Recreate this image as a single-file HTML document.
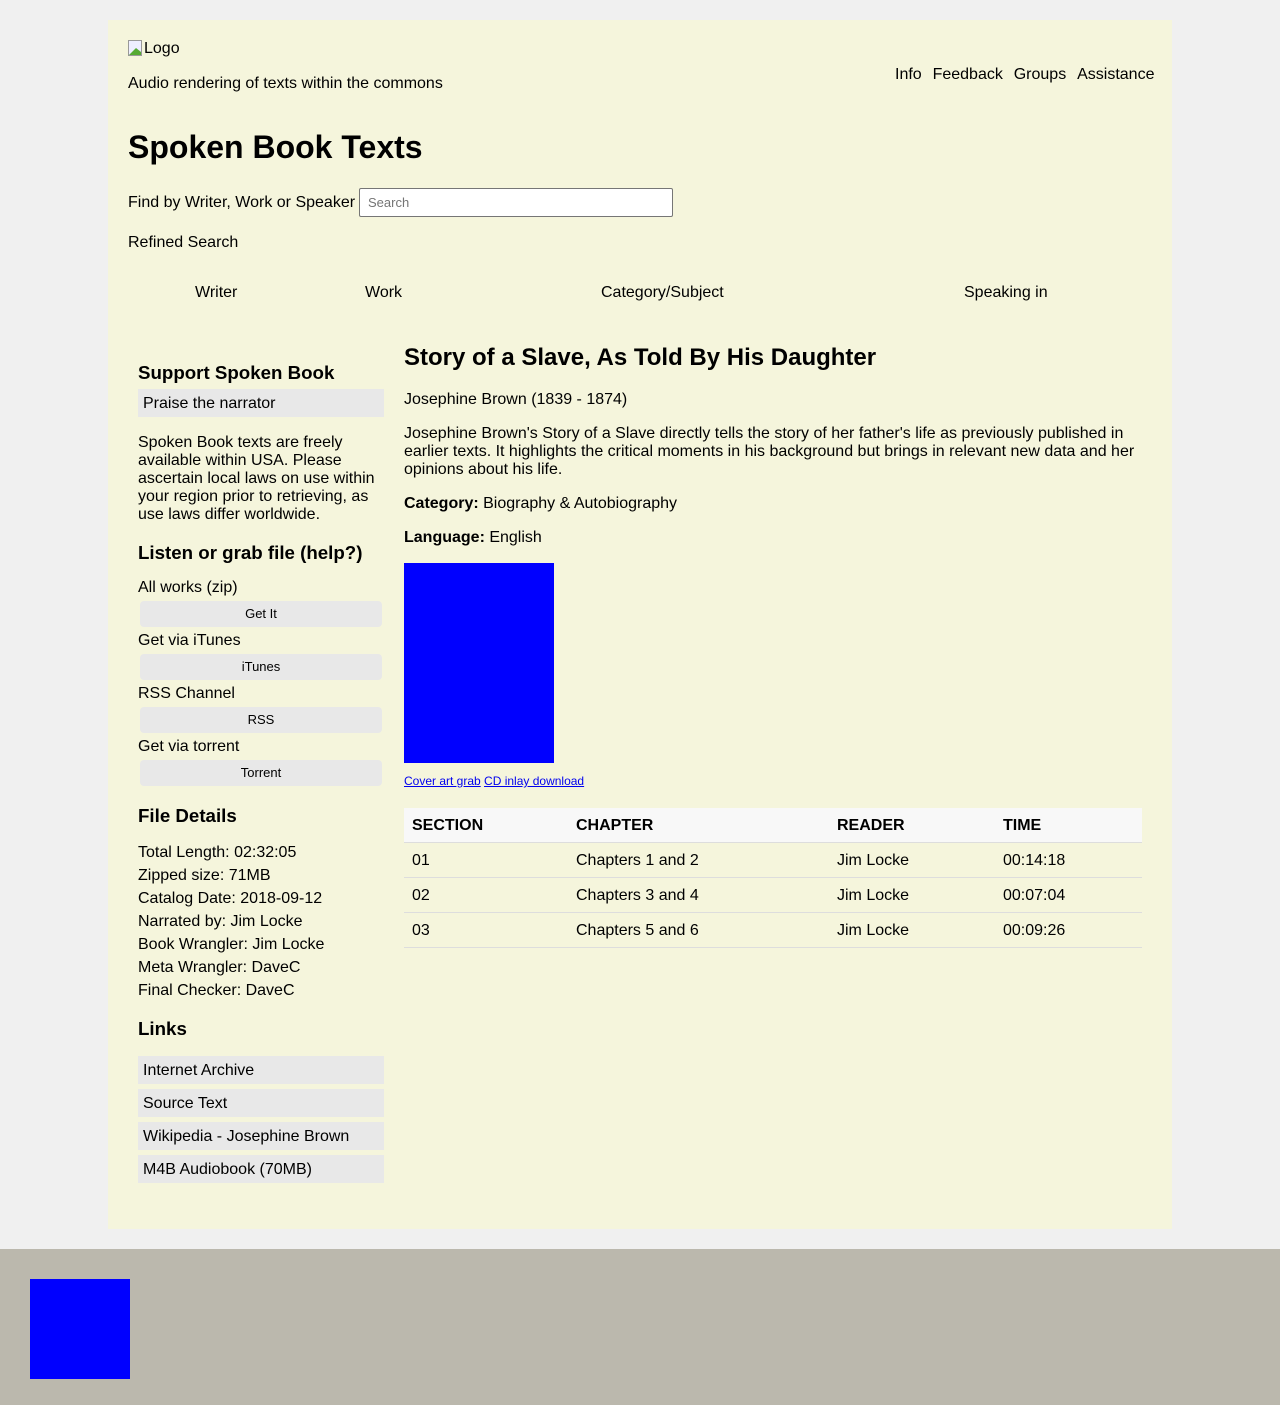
<!DOCTYPE html>
<html><head><meta charset="utf-8"><style>
html,body{margin:0;padding:0}
body{width:1280px;height:1405px;background:#f0f0f0;position:relative;font-family:"Liberation Sans",Arial,sans-serif;font-size:16px;color:#000;overflow:hidden}
.c{position:absolute;left:108px;top:20px;width:1064px;height:1209px;background:#f5f5dc}
.t{position:absolute;line-height:18px;white-space:nowrap}
.b{font-weight:bold}
.h3{position:absolute;font-weight:bold;font-size:18.72px;line-height:20px;white-space:nowrap}
.box{position:absolute;left:138px;width:246px;height:28px;background:#e8e8e8;line-height:28px;box-sizing:border-box;padding-left:5px;padding-top:1px}
.btn{position:absolute;left:140px;width:242px;height:26px;background:#e8e8e8;border-radius:4px;text-align:center;font-size:13px;line-height:26px}
.row{position:absolute;left:404px;width:738px;height:35px;border-bottom:1px solid #ddd;box-sizing:border-box}
.row span{position:absolute;top:9px;line-height:18px}
a{color:#00e;text-decoration:underline}
</style></head><body>
<div class="c"></div>
<div class="t" style="left:128px;top:40px"><svg width="16" height="16" style="vertical-align:-3px" viewBox="0 0 16 16"><rect x="0.5" y="0.5" width="13" height="15" fill="#eef" stroke="#999"/><path d="M1 15 L8 8 L13 12 L13 15Z" fill="#5a3"/></svg>Logo</div>
<div class="t" style="left:128px;top:75px">Audio rendering of texts within the commons</div>
<div class="t" style="left:895px;top:66px;word-spacing:1px">Info&nbsp;&nbsp;Feedback&nbsp;&nbsp;Groups&nbsp;&nbsp;Assistance</div>
<div class="t b" style="left:128px;top:128px;font-size:32px;line-height:38px">Spoken Book Texts</div>
<div class="t" style="left:128px;top:194px">Find by Writer, Work or Speaker</div>
<div style="position:absolute;left:359px;top:188px;width:314px;height:29px;border:1px solid #767676;background:#fff;box-sizing:border-box;border-radius:2px;font-size:13px;color:#757575;line-height:27px;padding-left:8px">Search</div>
<div class="t" style="left:128px;top:234px">Refined Search</div>
<div class="t" style="left:195px;top:284px">Writer</div>
<div class="t" style="left:365px;top:284px">Work</div>
<div class="t" style="left:601px;top:284px">Category/Subject</div>
<div class="t" style="left:964px;top:284px">Speaking in</div>

<div class="h3" style="left:138px;top:363px">Support Spoken Book</div>
<div class="box" style="top:389px">Praise the narrator</div>
<div style="position:absolute;left:138px;top:434px;width:246px;line-height:18px">Spoken Book texts are freely available within USA. Please ascertain local laws on use within your region prior to retrieving, as use laws differ worldwide.</div>
<div class="h3" style="left:138px;top:543px">Listen or grab file (help?)</div>
<div class="t" style="left:138px;top:579px">All works (zip)</div>
<div class="btn" style="top:601px">Get It</div>
<div class="t" style="left:138px;top:632px">Get via iTunes</div>
<div class="btn" style="top:654px">iTunes</div>
<div class="t" style="left:138px;top:685px">RSS Channel</div>
<div class="btn" style="top:707px">RSS</div>
<div class="t" style="left:138px;top:738px">Get via torrent</div>
<div class="btn" style="top:760px">Torrent</div>
<div class="h3" style="left:138px;top:806px">File Details</div>
<div style="position:absolute;left:138px;top:841px;line-height:23px;white-space:nowrap">Total Length: 02:32:05<br>Zipped size: 71MB<br>Catalog Date: 2018-09-12<br>Narrated by: Jim Locke<br>Book Wrangler: Jim Locke<br>Meta Wrangler: DaveC<br>Final Checker: DaveC</div>
<div class="h3" style="left:138px;top:1019px">Links</div>
<div class="box" style="top:1056px">Internet Archive</div>
<div class="box" style="top:1089px">Source Text</div>
<div class="box" style="top:1122px">Wikipedia - Josephine Brown</div>
<div class="box" style="top:1155px">M4B Audiobook (70MB)</div>

<div class="t b" style="left:404px;top:344px;font-size:24px;line-height:28px">Story of a Slave, As Told By His Daughter</div>
<div class="t" style="left:404px;top:391px">Josephine Brown (1839 - 1874)</div>
<div style="position:absolute;left:404px;top:425px;width:740px;line-height:18px">Josephine Brown's Story of a Slave directly tells the story of her father's life as previously published in earlier texts. It highlights the critical moments in his background but brings in relevant new data and her opinions about his life.</div>
<div class="t" style="left:404px;top:495px"><b>Category:</b> Biography &amp; Autobiography</div>
<div class="t" style="left:404px;top:529px"><b>Language:</b> English</div>
<div style="position:absolute;left:404px;top:563px;width:150px;height:200px;background:#00f"></div>
<div class="t" style="left:404px;top:773px;font-size:12px;line-height:16px"><a>Cover art grab</a> <a>CD inlay download</a></div>
<div class="row" style="top:808px;background:#f8f8f8;height:35px"><span class="b" style="left:8px">SECTION</span><span class="b" style="left:172px">CHAPTER</span><span class="b" style="left:433px">READER</span><span class="b" style="left:599px">TIME</span></div>
<div class="row" style="top:843px"><span style="left:8px">01</span><span style="left:172px">Chapters 1 and 2</span><span style="left:433px">Jim Locke</span><span style="left:599px">00:14:18</span></div>
<div class="row" style="top:878px"><span style="left:8px">02</span><span style="left:172px">Chapters 3 and 4</span><span style="left:433px">Jim Locke</span><span style="left:599px">00:07:04</span></div>
<div class="row" style="top:913px"><span style="left:8px">03</span><span style="left:172px">Chapters 5 and 6</span><span style="left:433px">Jim Locke</span><span style="left:599px">00:09:26</span></div>

<div style="position:absolute;left:0;top:1249px;width:1280px;height:156px;background:#bbb8ad"></div>
<div style="position:absolute;left:30px;top:1279px;width:100px;height:100px;background:#00f"></div>
</body></html>
